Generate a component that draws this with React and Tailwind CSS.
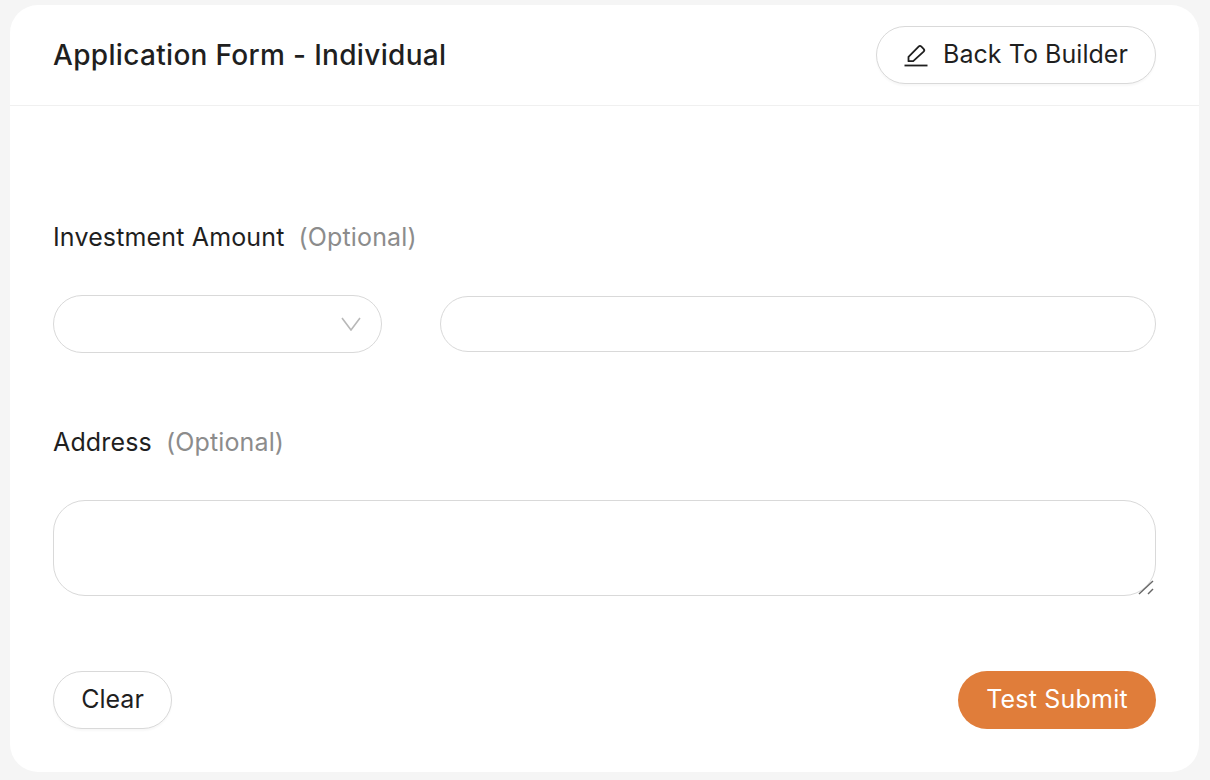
const fieldClass = 'border border-[#d9d9d9] bg-white outline-none';

const Label = ({ name, labelClass }) => (
  <div className={`flex items-center gap-[14px] text-[25px] leading-[30px] tracking-[0.15px] ${labelClass}`}>
    <span className="text-[#1f1f1f]">{name}</span>
    <span className="text-[#8c8c8c]">(Optional)</span>
  </div>
);

const App = () => {
  return (
    <div className="h-[780px] overflow-hidden bg-[#f5f5f5] pt-[5px] pl-[10px] pr-[11px] font-['Inter',sans-serif]">
      <div className="flex h-[767px] flex-col rounded-[28px] bg-white">
        {/* Header */}
        <div className="flex h-[101px] items-center justify-between border-b border-[#f0f0f0] px-[43px]">
          <h1 className="text-[28px] font-medium leading-[36px] tracking-[0.32px] text-[#1f1f1f]">Application Form - Individual</h1>
          <button className="flex h-[58px] w-[280px] items-center justify-center gap-[15px] rounded-full border border-[#d9d9d9] bg-white text-[25px] tracking-[0.05px] text-[#1f1f1f] shadow-[0_2px_2px_rgba(0,0,0,0.03)]">
            <svg width="24" height="24" viewBox="0 0 24 24" fill="none" stroke="#1f1f1f" strokeWidth="1.8">
              <path d="M0.5 22.5H23.5" />
              <path d="M4.5 18.2v-4.4L14.6 3.6a2 2 0 0 1 2.8 0l2.2 2.2a2 2 0 0 1 0 2.8L9.2 18.2z" strokeLinejoin="round" />
            </svg>
            Back To Builder
          </button>
        </div>

        {/* Form */}
        <div className="flex flex-1 flex-col px-[43px]">
          <Label name="Investment Amount" labelClass="mt-[116px]" />
          <div className="mt-[43px] flex items-center gap-[58px]">
            <div className={`flex h-[58px] w-[329px] items-center justify-end rounded-full pr-[20px] ${fieldClass}`}>
              <svg width="20" height="14" viewBox="0 0 20 14" fill="none" stroke="#b8b8b8" strokeWidth="1.6">
                <path d="M1 1l9 12 9-12" />
              </svg>
            </div>
            <input className={`h-[56px] flex-1 rounded-full px-6 ${fieldClass}`} />
          </div>
          <Label name="Address" labelClass="mt-[74px]" />
          <div className="relative mt-[43px]">
            <textarea className={`block h-[96px] w-full resize-none rounded-[32px] px-6 py-3 ${fieldClass}`} />
            {/* resize grip */}
            <svg className="absolute right-[2px] bottom-[1px]" width="16" height="15" viewBox="0 0 16 15" fill="none" stroke="#666666" strokeWidth="1.4">
              <path d="M1 14L15 1" />
              <path d="M10 14l5-5" />
            </svg>
          </div>
          <div className="mt-[75px] flex items-center justify-between">
            <button className="h-[58px] w-[119px] rounded-full border border-[#d9d9d9] bg-white text-[25px] text-[#1f1f1f] shadow-[0_2px_2px_rgba(0,0,0,0.03)]">Clear</button>
            <button className="h-[58px] w-[198px] rounded-full bg-[#e07d3a] text-[25px] tracking-[0.2px] text-white">Test Submit</button>
          </div>
        </div>
      </div>
    </div>
  );
};

export default App;
